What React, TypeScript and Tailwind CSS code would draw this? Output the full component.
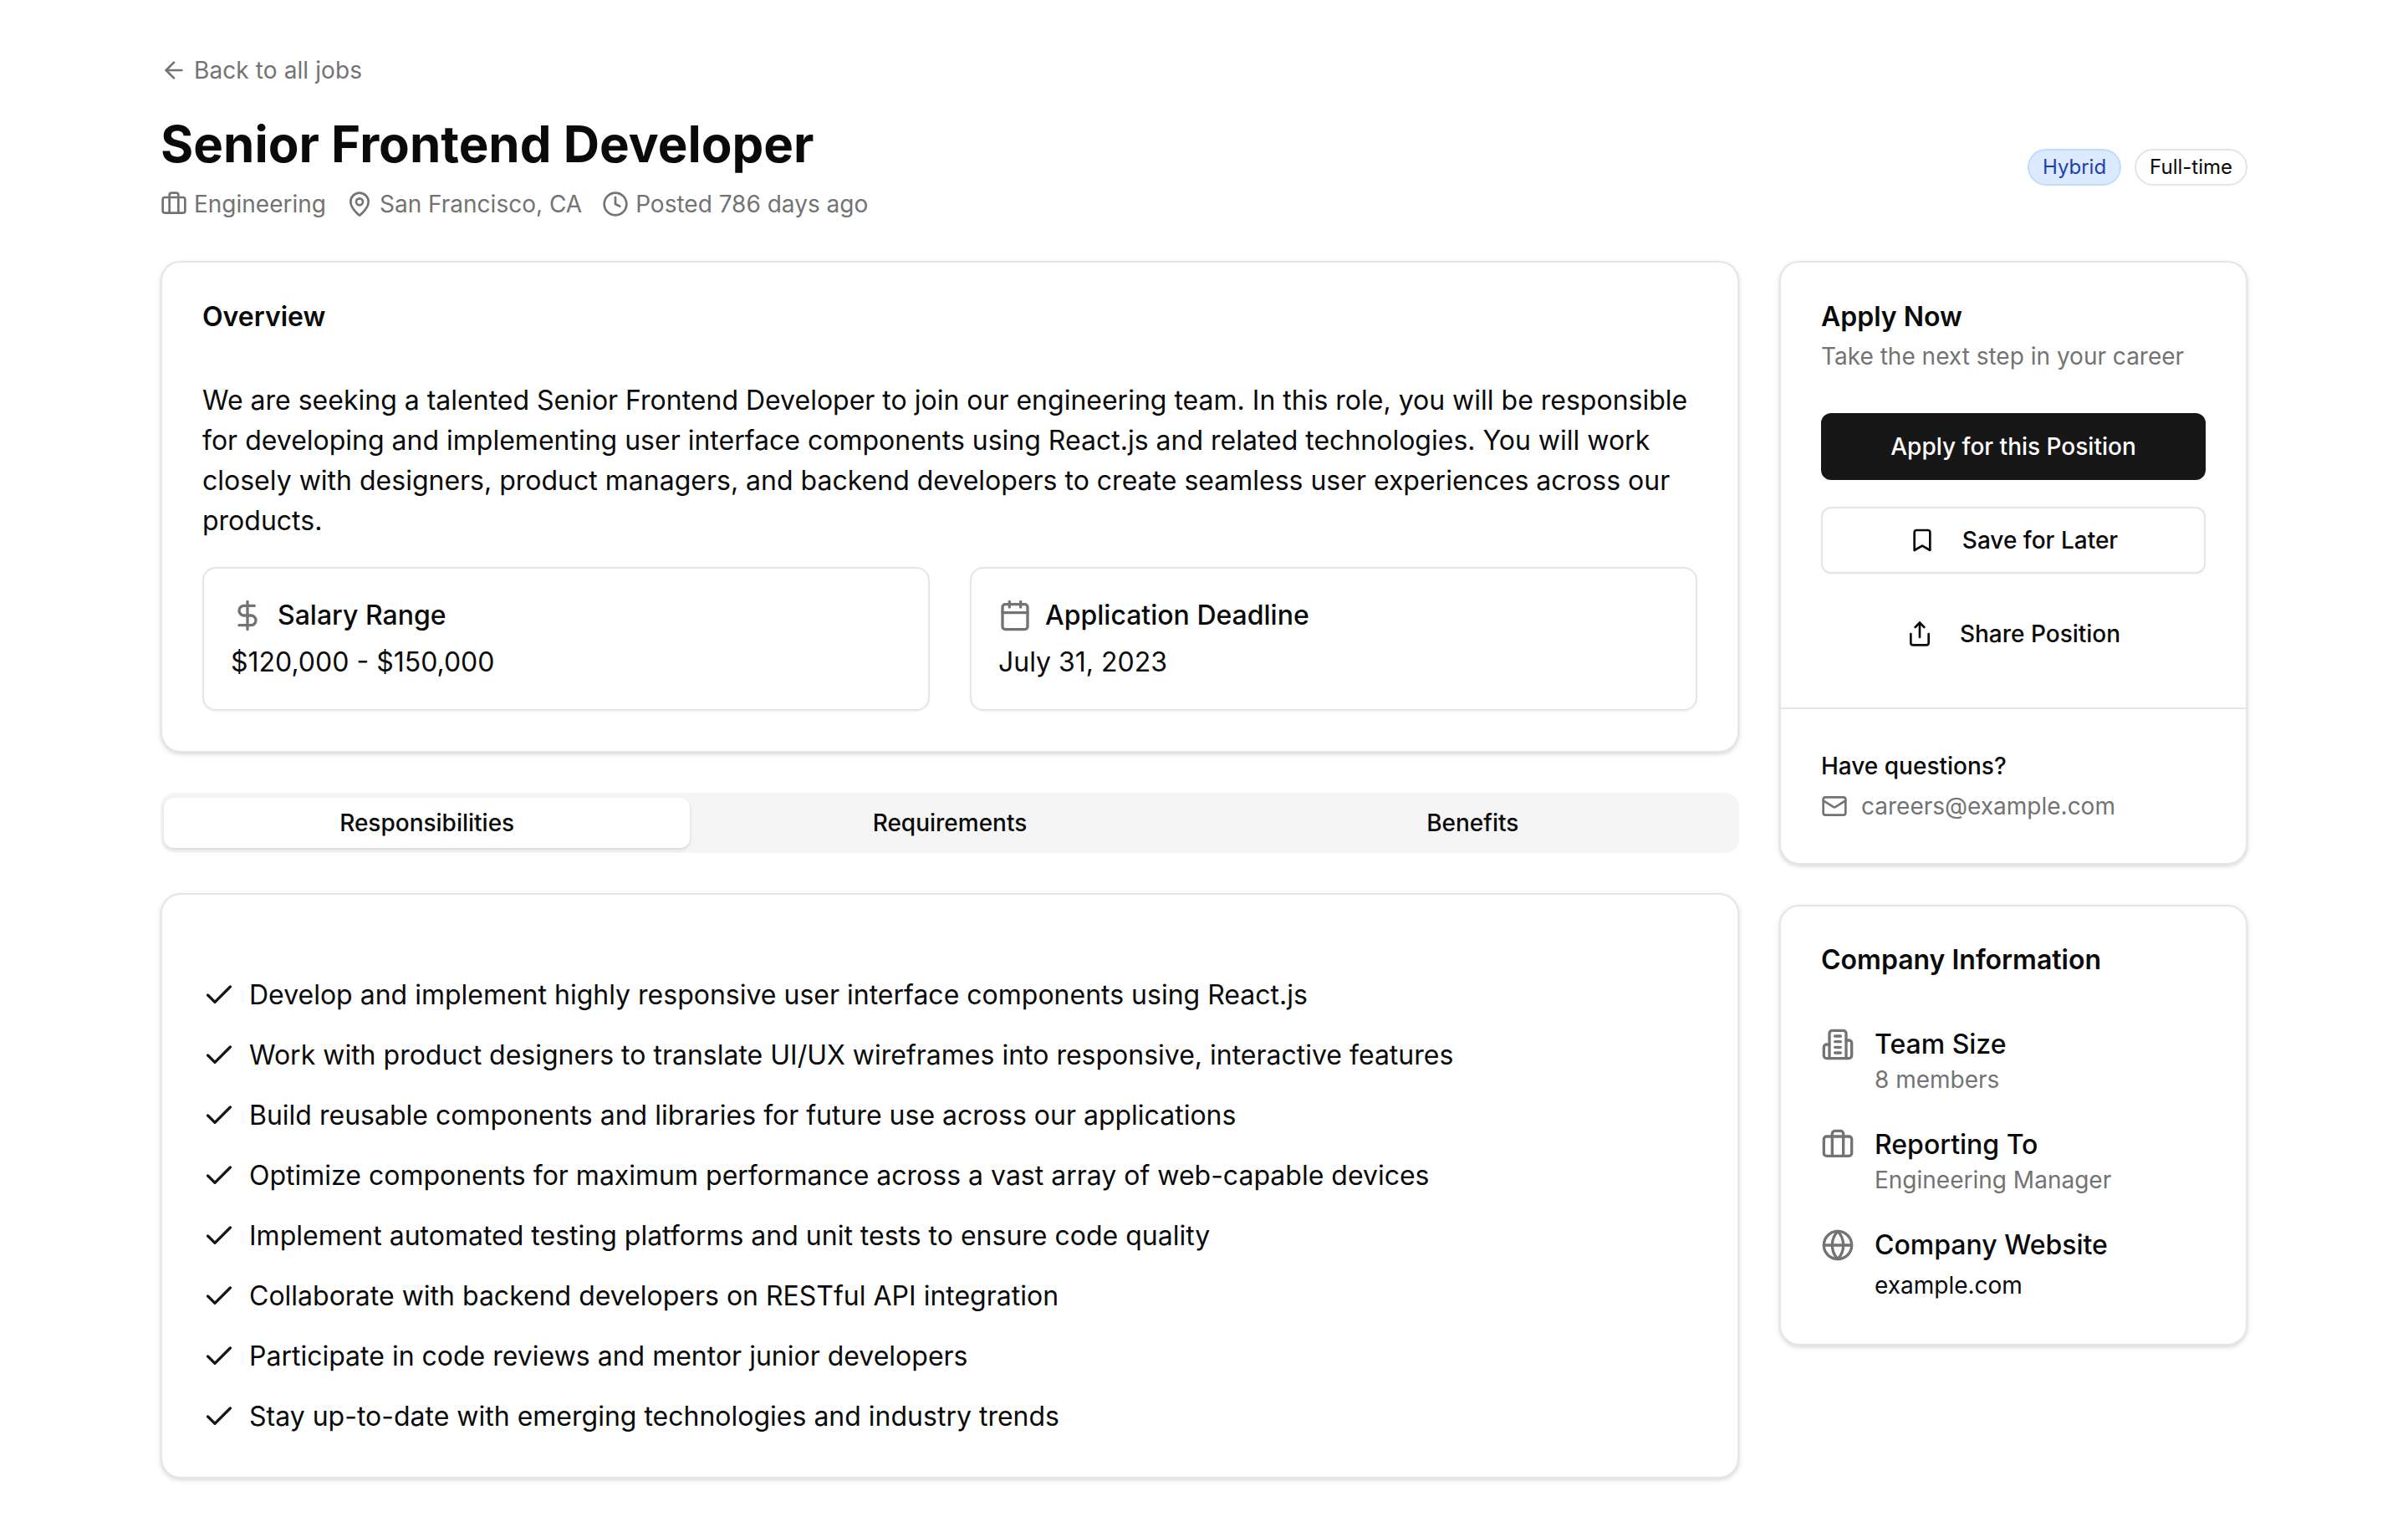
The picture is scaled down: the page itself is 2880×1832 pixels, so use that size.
import { ArrowLeft, Bookmark, Briefcase, Calendar, Check, Clock, DollarSign, Globe, Mail, MapPin, Share } from 'lucide-react';

const tasks = [
  'Develop and implement highly responsive user interface components using React.js',
  'Work with product designers to translate UI/UX wireframes into responsive, interactive features',
  'Build reusable components and libraries for future use across our applications',
  'Optimize components for maximum performance across a vast array of web-capable devices',
  'Implement automated testing platforms and unit tests to ensure code quality',
  'Collaborate with backend developers on RESTful API integration',
  'Participate in code reviews and mentor junior developers',
  'Stay up-to-date with emerging technologies and industry trends',
];

const card = 'bg-white border-2 border-[#e5e5e5] rounded-[24px] shadow-[0_2px_6px_rgba(0,0,0,0.1),0_2px_4px_rgba(0,0,0,0.06)]';

// tower with four floor lines, the package's current building icon has a door instead
function TowerIcon() {
  return (
    <svg width="40" height="40" viewBox="0 0 24 24" fill="none" stroke="currentColor" strokeWidth="2" strokeLinecap="round" strokeLinejoin="round" className="shrink-0 mt-[4px] text-[#737373]">
      <path d="M6 22V4a2 2 0 0 1 2-2h8a2 2 0 0 1 2 2v18Z" />
      <path d="M6 12H4a2 2 0 0 0-2 2v6a2 2 0 0 0 2 2h2" />
      <path d="M18 9h2a2 2 0 0 1 2 2v9a2 2 0 0 1-2 2h-2" />
      <path d="M10 6h4" />
      <path d="M10 10h4" />
      <path d="M10 14h4" />
      <path d="M10 18h4" />
    </svg>
  );
}

export default function App() {
  return (
    <div className="min-h-[1832px] bg-white px-[192px] pt-[64px] pb-[64px] font-['Inter',sans-serif] text-[#0a0a0a]">
      {/* Header */}
      <a className="flex items-center gap-[8px] text-[28px] leading-[40px] tracking-[0.1px] text-[#737373]">
        <ArrowLeft size={32} strokeWidth={2} />
        Back to all jobs
      </a>
      <div className="mt-[32px] mb-[48px] flex items-center justify-between">
        <div>
          <h1 className="text-[60px] leading-[72px] font-bold">Senior Frontend Developer</h1>
          <div className="mt-[16px] flex items-center gap-[24px] text-[28px] leading-[40px] text-[#737373]">
            <span className="flex items-center gap-[8px]"><Briefcase size={32} />Engineering</span>
            <span className="flex items-center gap-[8px]"><MapPin size={32} />San Francisco, CA</span>
            <span className="flex items-center gap-[8px]"><Clock size={32} />Posted 786 days ago</span>
          </div>
        </div>
        <div className="flex items-center gap-[16px]">
          <span className="h-[44px] px-[16px] flex items-center rounded-full border-2 border-[#bfdbfe] bg-[#dbeafe] text-[24px] text-[#1e40af]">Hybrid</span>
          <span className="h-[44px] px-[16px] flex items-center rounded-full border-2 border-[#e5e5e5] text-[24px]">Full-time</span>
        </div>
      </div>

      <div className="flex gap-[48px] items-start">
        {/* Main column */}
        <div className="w-[1888px] flex flex-col gap-[48px]">
          <section className={`${card} p-[48px]`}>
            <h2 className="text-[32px] leading-[33px] font-semibold">Overview</h2>
            <p className="mt-[60px] text-[32px] leading-[48px]">
              We are seeking a talented Senior Frontend Developer to join our engineering team. In this role, you will be responsible for developing and implementing user interface components using React.js and related technologies. You will work closely with designers, product managers, and backend developers to create seamless user experiences across our products.
            </p>
            <div className="mt-[31px] grid grid-cols-2 gap-[48px]">
              <div className="border-2 border-[#e5e5e5] rounded-[16px] p-[32px] shadow-[0_1px_3px_rgba(0,0,0,0.05)]">
                <div className="flex items-center gap-[16px] text-[32px] leading-[48px] font-medium">
                  <DollarSign size={40} className="text-[#737373]" />
                  Salary Range
                </div>
                <div className="mt-[8px] text-[32px] leading-[48px]">$120,000 - $150,000</div>
              </div>
              <div className="border-2 border-[#e5e5e5] rounded-[16px] p-[32px] shadow-[0_1px_3px_rgba(0,0,0,0.05)]">
                <div className="flex items-center gap-[16px] text-[32px] leading-[48px] font-medium">
                  <Calendar size={40} className="text-[#737373]" />
                  Application Deadline
                </div>
                <div className="mt-[8px] text-[32px] leading-[48px]">July 31, 2023</div>
              </div>
            </div>
          </section>

          {/* Tabs */}
          <div className="grid grid-cols-3 h-[72px] p-[6px] rounded-[16px] bg-[#f5f5f5] text-[28px] font-medium">
            <div className="-mx-[2px] flex items-center justify-center rounded-[12px] bg-white shadow-[0_2px_4px_rgba(0,0,0,0.12)]">Responsibilities</div>
            <div className="flex items-center justify-center">Requirements</div>
            <div className="flex items-center justify-center">Benefits</div>
          </div>

          <section className={`${card} px-[48px] pt-[96px] pb-[48px]`}>
            <ul className="flex flex-col gap-[24px]">
              {tasks.map((task) => (
                <li key={task} className="flex items-center gap-[16px] text-[32px] leading-[48px]">
                  <Check size={40} className="shrink-0 text-[#171717]" />
                  {task}
                </li>
              ))}
            </ul>
          </section>
        </div>

        {/* Sidebar */}
        <aside className="w-[560px] flex flex-col gap-[48px]">
          <section className={card}>
            <div className="p-[48px]">
              <h2 className="text-[32px] leading-[33px] font-semibold">Apply Now</h2>
              <p className="mt-[11px] text-[28px] leading-[40px] text-[#737373]">Take the next step in your career</p>
              <div className="mt-[48px] flex flex-col gap-[32px]">
                <button className="h-[80px] rounded-[12px] bg-[#171717] text-[28px] font-medium text-white">Apply for this Position</button>
                <button className="h-[80px] rounded-[12px] border-2 border-[#e5e5e5] text-[28px] font-medium flex items-center justify-center gap-[32px] shadow-[0_1px_2px_rgba(0,0,0,0.05)]">
                  <Bookmark size={32} />
                  Save for Later
                </button>
                <button className="h-[80px] rounded-[12px] text-[28px] font-medium flex items-center justify-center gap-[32px]">
                  <Share size={32} />
                  Share Position
                </button>
              </div>
            </div>
            <div className="border-t-2 border-[#e5e5e5] px-[48px] pt-[48px] pb-[48px]">
              <div className="text-[28px] leading-[40px] font-medium">Have questions?</div>
              <div className="mt-[8px] flex items-center gap-[16px] text-[28px] leading-[40px] text-[#737373]">
                <Mail size={32} />
                careers@example.com
              </div>
            </div>
          </section>

          <section className={`${card} p-[48px]`}>
            <h2 className="text-[32px] leading-[32px] font-semibold">Company Information</h2>
            <div className="mt-[61px] flex flex-col gap-[36px]">
              <div className="flex gap-[24px]">
                <TowerIcon />
                <div>
                  <div className="text-[32px] leading-[48px] font-medium">Team Size</div>
                  <div className="text-[28px] leading-[36px] text-[#737373]">8 members</div>
                </div>
              </div>
              <div className="flex gap-[24px]">
                <Briefcase size={40} className="shrink-0 mt-[4px] text-[#737373]" />
                <div>
                  <div className="text-[32px] leading-[48px] font-medium">Reporting To</div>
                  <div className="text-[28px] leading-[36px] text-[#737373]">Engineering Manager</div>
                </div>
              </div>
              <div className="flex gap-[24px]">
                <Globe size={40} className="shrink-0 mt-[4px] text-[#737373]" />
                <div>
                  <div className="text-[32px] leading-[48px] font-medium">Company Website</div>
                  <div className="mt-[2px] text-[28px] leading-[44px]">example.com</div>
                </div>
              </div>
            </div>
          </section>
        </aside>
      </div>
    </div>
  );
}
